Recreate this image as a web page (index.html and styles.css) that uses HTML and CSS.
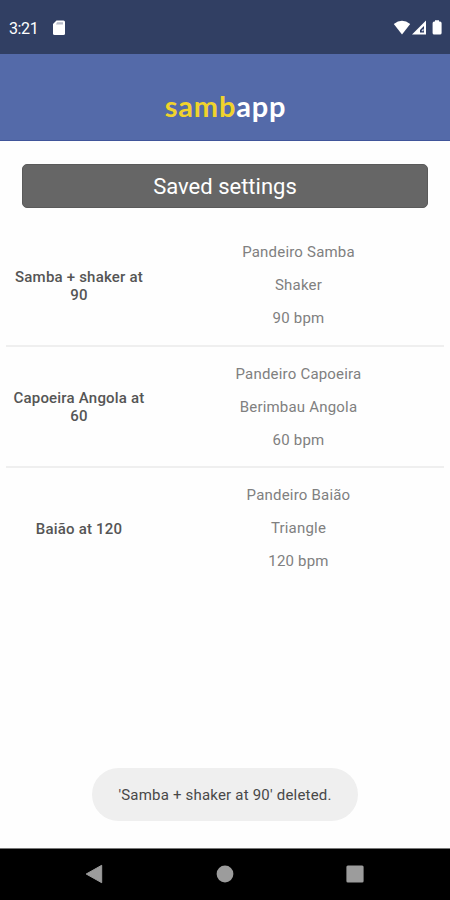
FILE: index.html
```html
<!DOCTYPE html>
<html lang="en">
<head>
  <meta charset="UTF-8">
  <meta name="viewport" content="width=device-width, initial-scale=1">
  <title>sambapp</title>
  <link rel="stylesheet" href="styles.css">
</head>
<body>

<div class="statusbar">
  <span class="time">3:21</span>
  <svg class="sdcard" width="14" height="16" viewBox="0 0 14 16">
    <path d="M4.5 0.5H11.5Q13 0.5 13 2V13.5Q13 15 11.5 15H2.5Q1 15 1 13.5V4Z" fill="#fff"/>
    <path d="M5 2.2H11V4.5H4Z" fill="#b9bdc9"/>
  </svg>
  <svg class="signals" width="52" height="18" viewBox="0 0 52 18">
    <path d="M0.8 5Q9 -1.6 17.2 5L9 15.5Z" fill="#fff"/>
    <path d="M33 1.5V15.5H19Z" fill="#fff"/>
    <path d="M31 7V13.5H27V11Z" fill="#26355f"/>
    <path d="M30.6 9.5V12.3H28.7V11.3Z" fill="#cfd4e2"/>
    <path d="M42 1.2H46V2.6H47Q48.6 2.6 48.6 4.2V14Q48.6 15.6 47 15.6H41.2Q39.6 15.6 39.6 14V4.2Q39.6 2.6 41.2 2.6H42Z" fill="#fff"/>
  </svg>
</div>

<header class="header">
  <div class="logo"><span class="logo-samb">samb</span>app</div>
</header>

<main class="content">
  <h1 class="title">Saved settings</h1>

  <div class="list">
    <div class="row">
      <div class="name">Samba + shaker at 90</div>
      <div class="details">
        <div>Pandeiro Samba</div>
        <div>Shaker</div>
        <div>90 bpm</div>
      </div>
    </div>
    <div class="row">
      <div class="name">Capoeira Angola at 60</div>
      <div class="details">
        <div>Pandeiro Capoeira</div>
        <div>Berimbau Angola</div>
        <div>60 bpm</div>
      </div>
    </div>
    <div class="row">
      <div class="name">Baião at 120</div>
      <div class="details">
        <div>Pandeiro Baião</div>
        <div>Triangle</div>
        <div>120 bpm</div>
      </div>
    </div>
  </div>

  <div class="toast">'Samba + shaker at 90' deleted.</div>
</main>

<!-- android buttons -->
<nav class="navbar">
  <svg width="18" height="20" viewBox="0 0 18 20"><path d="M16.7 1.3V18.7L1.2 10Z" fill="#9c9c9c" stroke="#9c9c9c" stroke-linejoin="round"/></svg>
  <svg width="18" height="18" viewBox="0 0 18 18"><circle cx="9" cy="9" r="8.4" fill="#9c9c9c"/></svg>
  <svg width="18" height="18" viewBox="0 0 18 18"><rect x="0.4" y="0.4" width="17.2" height="17.2" rx="1.5" fill="#9c9c9c"/></svg>
</nav>

</body>
</html>
```
FILE: styles.css
```css
* {
  box-sizing: border-box;
}
body {
  margin: 0;
  height: 900px;
  display: flex;
  flex-direction: column;
  font-family: Roboto, sans-serif;
  background: #fefefe;
  overflow: hidden;
}
.statusbar {
  height: 54px;
  display: flex;
  align-items: center;
  padding: 2px 6px 0 9px;
  background: #313f63;
  color: #fff;
}
.time {
  width: 43px;
  font-size: 16px;
  letter-spacing: -0.4px;
}
.sdcard {
  margin-top: -1px;
}
.signals {
  margin: -1px -1px 0 auto;
}
.header {
  height: 87px;
  display: flex;
  justify-content: center;
  padding-top: 34px;
  background: #546aa9;
  border-bottom: 1px solid #40559a;
}
.logo {
  padding-left: 1px;
  font-family: Lato, sans-serif;
  font-size: 29px;
  font-weight: bold;
  line-height: 36px;
  letter-spacing: 0.8px;
  color: #fff;
}
.logo-samb {
  color: #f0d32c;
}
.content {
  flex: 1;
  display: flex;
  flex-direction: column;
  padding: 23px 6px 27px;
}
.title {
  margin: 0 16px;
  height: 44px;
  line-height: 43px;
  text-align: center;
  font-size: 22px;
  font-weight: normal;
  color: #fff;
  background: #666;
  border: 1px solid #5a5a5a;
  border-radius: 5px;
}
.list {
  margin-top: 17px;
}
.row {
  display: flex;
  align-items: center;
  padding: 11px 0 9.6px;
  border-bottom: 2px solid #efefef;
}
.row:last-child {
  border-bottom: none;
}
.name {
  width: 146px;
  padding: 0 7px;
  text-align: center;
  font-size: 15px;
  font-weight: 500;
  line-height: 18px;
  letter-spacing: 0.2px;
  color: #555;
}
.details {
  flex: 1;
  padding-left: 1px;
  text-align: center;
  font-size: 15px;
  line-height: 33px;
  letter-spacing: 0.2px;
  color: #808080;
}
.toast {
  align-self: center;
  margin-top: auto;
  width: 266px;
  height: 53px;
  line-height: 54px;
  text-align: center;
  font-size: 15px;
  letter-spacing: 0.2px;
  color: #484848;
  background: #efefef;
  border-radius: 27px;
}
.navbar {
  height: 52px;
  display: flex;
  align-items: center;
  justify-content: space-between;
  padding: 0 86px 2px 85px;
  background: #000;
  border-top: 1px solid #777;
}
```
